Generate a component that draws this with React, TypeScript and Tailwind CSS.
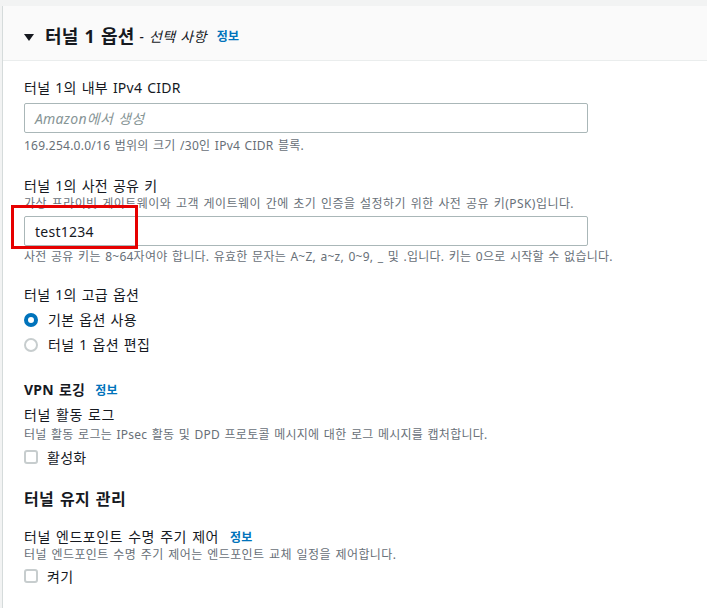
import React from 'react';

const font = {
  fontFamily: '"Noto Sans", "Noto Sans CJK KR", sans-serif',
};

function Info() {
  return <span className="ml-[10px] text-[12px] font-bold text-[#0073bb]">정보</span>;
}

function Radio({ checked, label }: { checked?: boolean; label: string }) {
  return (
    <div className="flex items-center h-[25px]">
      {checked ? (
        <span className="w-[14px] h-[14px] rounded-full border-[4px] border-[#0073bb] bg-white" />
      ) : (
        <span className="w-[14px] h-[14px] rounded-full border-2 border-[#c7cdce] bg-white" />
      )}
      <span className="ml-[10px] text-[14px] text-[#16191f]">{label}</span>
    </div>
  );
}

function Checkbox({ label }: { label: string }) {
  return (
    <div className="flex items-center h-[24px]">
      <span className="w-[14px] h-[14px] rounded-[3px] border-2 border-[#c7cdce] bg-white" />
      <span className="ml-[9px] text-[14px] text-[#16191f]">{label}</span>
    </div>
  );
}

export default function App() {
  return (
    <div
      className="w-[707px] h-[608px] bg-[#f2f3f3] pt-[6px] overflow-hidden tracking-[0.25px] [word-spacing:1.1px]"
      style={font}
    >
      <div className="ml-[2px] h-[602px] border-l border-[#d5dbdb] bg-white">
        {/* Header */}
        <div className="h-[55px] bg-[#fafafa] border-b border-[#eaeded] flex items-center pl-[21px] pt-[7px]">
          <svg width="10" height="7" viewBox="0 0 10 7" className="mt-[1px]">
            <polygon points="0,0 10,0 5,7" fill="#16191f" />
          </svg>
          <span className="ml-[11px] text-[18px] font-bold text-[#16191f] tracking-[0.2px]">터널 1 옵션</span>
          <span className="ml-[5px] text-[14px] italic text-[#16191f]">- 선택 사항</span>
          <Info />
        </div>

        {/* Body */}
        <div className="pl-[21px] pt-[17px] relative">
          <div className="text-[14px] text-[#16191f] leading-[20px]">터널 1의 내부 IPv4 CIDR</div>
          <div className="mt-[5px] w-[564px] h-[30px] border border-[#aab7b8] rounded-[2px] flex items-center px-[10px] text-[14px] italic text-[#879596]">
            Amazon에서 생성
          </div>
          <div className="mt-[4px] text-[12px] text-[#687078] leading-[18px]">169.254.0.0/16 범위의 크기 /30인 IPv4 CIDR 블록.</div>

          <div className="mt-[21px] text-[14px] text-[#16191f] leading-[20px]">터널 1의 사전 공유 키</div>
          <div className="text-[12px] text-[#687078] leading-[16px] tracking-[0.45px]">가상 프라이빗 게이트웨이와 고객 게이트웨이 간에 초기 인증을 설정하기 위한 사전 공유 키(PSK)입니다.</div>
          <div className="mt-[4px] w-[564px] h-[30px] border border-[#aab7b8] rounded-[2px] flex items-center px-[10px] text-[14px] text-[#16191f]">
            test1234
          </div>
          <div className="mt-[2px] text-[12px] text-[#687078] leading-[18px]">사전 공유 키는 8~64자여야 합니다. 유효한 문자는 A~Z, a~z, 0~9, _ 및 .입니다. 키는 0으로 시작할 수 없습니다.</div>

          <div className="mt-[19px] text-[14px] text-[#16191f] leading-[20px]">터널 1의 고급 옵션</div>
          <div className="mt-[2px]">
            <Radio checked label="기본 옵션 사용" />
            <Radio label="터널 1 옵션 편집" />
          </div>

          <div className="mt-[21px] flex items-baseline leading-[24px]">
            <span className="text-[14px] font-bold text-[#16191f]">VPN 로깅</span>
            <Info />
          </div>
          <div className="mt-[2px] text-[14px] text-[#16191f] leading-[20px] tracking-[0.5px]">터널 활동 로그</div>
          <div className="text-[12px] text-[#687078] leading-[20px]">터널 활동 로그는 IPsec 활동 및 DPD 프로토콜 메시지에 대한 로그 메시지를 캡처합니다.</div>
          <Checkbox label="활성화" />

          <div className="mt-[18px] text-[16px] font-bold text-[#16191f] leading-[24px] tracking-[0.4px]">터널 유지 관리</div>
          <div className="mt-[15px] flex items-baseline leading-[20px]">
            <span className="text-[14px] text-[#16191f] tracking-[0.5px]">터널 엔드포인트 수명 주기 제어</span>
            <span className="ml-[1px]"><Info /></span>
          </div>
          <div className="mt-[-1px] text-[12px] text-[#687078] leading-[16px] tracking-[0.4px]">터널 엔드포인트 수명 주기 제어는 엔드포인트 교체 일정을 제어합니다.</div>
          <div className="mt-[1px]">
            <Checkbox label="켜기" />
          </div>

          {/* red highlight */}
          <div className="absolute left-[8px] top-[144px] w-[127px] h-[44px] border-[3px] border-[#e60000] pointer-events-none" />
        </div>
      </div>
    </div>
  );
}
